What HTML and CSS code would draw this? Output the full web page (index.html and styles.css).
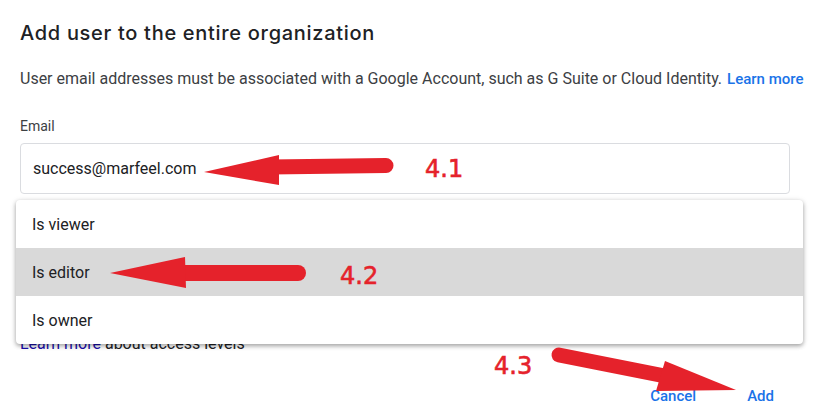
FILE: index.html
```html
<!DOCTYPE html>
<html lang="en">
  <head>
    <meta charset="UTF-8">
    <meta name="viewport" content="width=device-width, initial-scale=1.0">
    <title>Add user to the entire organization</title>
    <link rel="stylesheet" href="styles.css">
  </head>
  <body>

    <main class="dialog">
      <h1 class="dialog-title">Add user to the entire organization</h1>

      <p class="dialog-text">
        User email addresses must be associated with a Google Account, such as G Suite or Cloud Identity.
        <a href="#" class="link">Learn more</a>
      </p>

      <label class="field-label" for="email">Email</label>
      <div id="email" class="field-input">success@marfeel.com</div>

      <!-- access level select, covered by the open menu -->
      <div class="field-select">Is editor</div>

      <p class="access-help"><a href="#" class="link-plain">Learn more</a> about access levels</p>

      <div class="actions">
        <button class="btn">Cancel</button>
        <button class="btn">Add</button>
      </div>

      <ul class="menu">
        <li class="menu-item">Is viewer</li>
        <li class="menu-item selected">Is editor</li>
        <li class="menu-item">Is owner</li>
      </ul>

      <!-- annotation arrows on top of the screenshot -->
      <svg class="annotations" width="814" height="417" viewBox="0 0 814 417">
        <g fill="#e5222b" stroke="#e5222b">
          <line x1="386" y1="165.5" x2="270" y2="167" stroke-width="15" stroke-linecap="round" />
          <polygon points="204,172 279,155 279,185" stroke="none" />

          <line x1="298" y1="273" x2="180" y2="273" stroke-width="16" stroke-linecap="round" />
          <polygon points="110,273 185,257 186,288" stroke="none" />

          <line x1="559" y1="355" x2="670" y2="377" stroke-width="15" stroke-linecap="round" />
          <polygon points="736,390 665,361 656,391" stroke="none" />
        </g>
      </svg>
      <span class="step step-1">4.1</span>
      <span class="step step-2">4.2</span>
      <span class="step step-3">4.3</span>
    </main>

  </body>
</html>
```

FILE: styles.css
```css
body {
  background-color: #ffffff;
  font-family: Roboto, "Liberation Sans", sans-serif;
  color: #3c4043;
  margin: 0;
  padding: 0;
}

.dialog {
  position: relative;
  width: 814px;
  height: 417px;
  box-sizing: border-box;
  padding: 19px 24px 0 20px;
  display: flex;
  flex-direction: column;
  overflow: hidden;
}

.dialog-title {
  margin: 0;
  font-family: Inter, "Open Sans", sans-serif;
  font-size: 20px;
  font-weight: 500;
  letter-spacing: 0.7px;
  line-height: 28px;
  color: #202124;
}

.dialog-text {
  margin: 22px 0 0 0;
  font-size: 16px;
  line-height: 20px;
  white-space: nowrap;
}

.link {
  color: #1a73e8;
  font-weight: 500;
  font-size: 15px;
  text-decoration: none;
  margin-left: 1px;
}

.field-label {
  margin-top: 29px;
  font-size: 14px;
  line-height: 16px;
}

.field-input {
  margin-top: 9px;
  height: 51px;
  box-sizing: border-box;
  border: 1px solid #dadce0;
  border-radius: 4px;
  padding: 0 12px;
  display: flex;
  align-items: center;
  font-size: 16px;
  color: #202124;
}

.field-select {
  margin-top: 24px;
  height: 56px;
  box-sizing: border-box;
  border: 1px solid #dadce0;
  border-radius: 4px;
  padding: 0 12px;
  display: flex;
  align-items: center;
  font-size: 16px;
}

.access-help {
  margin: 60px 0 0 0;
  font-size: 16px;
  line-height: 20px;
  color: #202124;
}

.link-plain {
  color: #1a0dab;
  text-decoration: none;
}

.actions {
  margin-top: 32px;
  margin-right: 4px;
  display: flex;
  justify-content: flex-end;
  gap: 27px;
}

.btn {
  border: none;
  background: none;
  padding: 0 12px;
  font-family: Roboto, sans-serif;
  font-size: 15px;
  font-weight: 500;
  line-height: 20px;
  color: #1a73e8;
  cursor: pointer;
}

.menu {
  position: absolute;
  left: 16px;
  top: 200px;
  width: 787px;
  margin: 0;
  padding: 0;
  list-style: none;
  background-color: #ffffff;
  border-radius: 4px;
  box-shadow: 0 2px 4px rgba(0, 0, 0, 0.3), 0 1px 6px rgba(0, 0, 0, 0.12);
  overflow: hidden;
}

.menu-item {
  height: 48px;
  padding: 0 16px;
  display: flex;
  align-items: center;
  font-size: 16px;
  color: #202124;
}

.menu-item.selected {
  background-color: #d9d9d9;
}

.annotations {
  position: absolute;
  left: 0;
  top: 0;
  pointer-events: none;
}

.step {
  position: absolute;
  font-family: "DejaVu Sans", sans-serif;
  font-size: 24px;
  line-height: 24px;
  color: #e5222b;
  -webkit-text-stroke: 0.6px #e5222b;
}

.step-1 {
  left: 425px;
  top: 157px;
}

.step-2 {
  left: 340px;
  top: 264px;
}

.step-3 {
  left: 494px;
  top: 354px;
}
```
